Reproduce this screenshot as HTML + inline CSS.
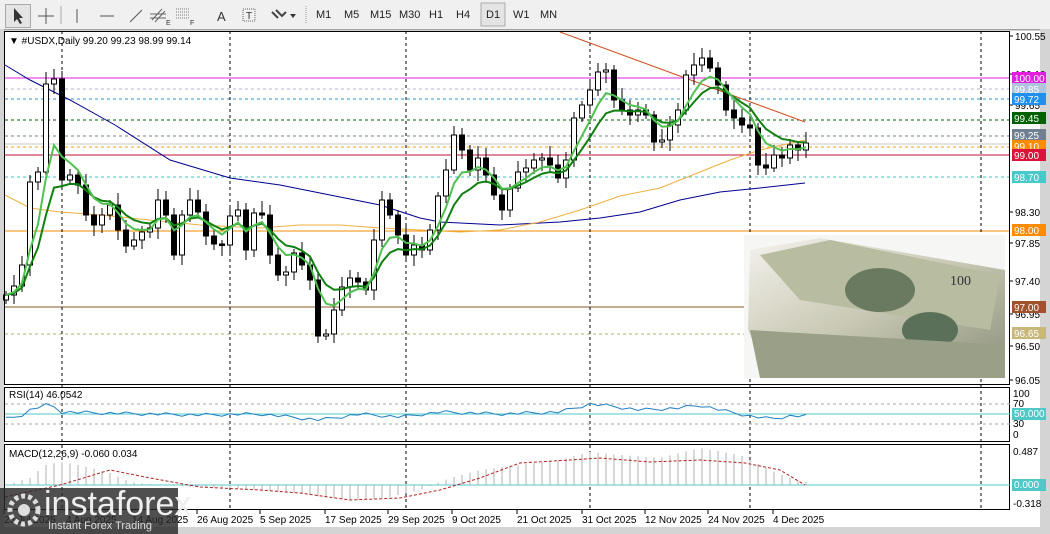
<!DOCTYPE html>
<html><head><meta charset="utf-8">
<style>
html,body{margin:0;padding:0;width:1050px;height:534px;overflow:hidden;background:#d4d4d4;font-family:"Liberation Sans",sans-serif}
#tb{position:absolute;left:0;top:0;width:1050px;height:29px;background:#f0f0f0;border-bottom:1px solid #a0a0a0}
.b{position:absolute;top:5px;font-size:11px;color:#222}
svg{position:absolute;left:0;top:0}
</style></head><body>
<div id="tb">
<div style="position:absolute;left:5px;top:4px;width:24px;height:22px;border:1px solid #aaa;background:#e4e4e4"></div>
<svg width="560" height="29" style="position:absolute;left:0;top:0">
<path d="M14 8 L14 22 L17 19 L20 24 L22 23 L19 18 L23 18 Z" fill="#333"/>
<path d="M46 8 V24 M38 16 H54" stroke="#555"/>
<line x1="61" y1="6" x2="61" y2="24" stroke="#aaa"/>
<line x1="77" y1="9" x2="77" y2="23" stroke="#555"/>
<line x1="100" y1="16" x2="114" y2="16" stroke="#555"/>
<line x1="130" y1="22" x2="142" y2="10" stroke="#555"/>
<path d="M152 20 L162 9 M155 22 L165 11 M150 14 H166 M150 18 H166" stroke="#666"/><text x="166" y="25" font-size="7" fill="#333">E</text>
<path d="M176 9 H190 M176 12 H190 M176 15 H190 M176 18 H190" stroke="#777" stroke-dasharray="1 1"/><text x="190" y="25" font-size="7" fill="#333">F</text>
<text x="217" y="21" font-size="13" fill="#333">A</text>
<rect x="243" y="9" width="12" height="12" fill="none" stroke="#666" stroke-dasharray="1 1"/><text x="246" y="19" font-size="10" fill="#333">T</text>
<path d="M272 12 L278 18 M276 10 L282 16 L286 12" stroke="#444" stroke-width="2" fill="none"/><path d="M290 14 L296 14 L293 18 Z" fill="#333"/>
<line x1="306" y1="6" x2="306" y2="24" stroke="#999" stroke-dasharray="1 1"/>
<rect x="481" y="3" width="24" height="23" fill="#e4e4e4" stroke="#aaa"/>
</svg>
<span class="b" style="left:316px;top:9px">M1</span><span class="b" style="left:344px;top:9px">M5</span><span class="b" style="left:370px;top:9px">M15</span><span class="b" style="left:399px;top:9px">M30</span><span class="b" style="left:429px;top:9px">H1</span><span class="b" style="left:456px;top:9px">H4</span><span class="b" style="left:486px;top:9px">D1</span><span class="b" style="left:513px;top:9px">W1</span><span class="b" style="left:540px;top:9px">MN</span>
</div>
<svg id="c" width="1050" height="534" style="top:0">
<rect x="4" y="31" width="1042" height="497" fill="#fff"/>
<rect x="1040" y="29" width="10" height="505" fill="#d4d4d4"/>
<rect x="0" y="527" width="1050" height="7" fill="#d4d4d4"/>
<rect x="0" y="29" width="4" height="505" fill="#d4d4d4"/>
<g id="g"></g>
</svg>
<script>
var g=document.getElementById('g'),s='';
function L(x1,y1,x2,y2,c,w,d){s+='<line x1="'+x1+'" y1="'+y1+'" x2="'+x2+'" y2="'+y2+'" stroke="'+c+'" stroke-width="'+(w||1)+'"'+(d?' stroke-dasharray="'+d+'"':'')+'/>';}
function T(x,y,t,c,sz,f){s+='<text x="'+x+'" y="'+y+'" font-size="'+(sz||10)+'" fill="'+(c||'#000')+'"'+(f?' font-family="'+f+'"':'')+'>'+t+'</text>';}
function P(pts,c,w,d){s+='<polyline fill="none" points="'+pts.map(function(p){return p[0]+','+p[1]}).join(' ')+'" stroke="'+c+'" stroke-width="'+(w||1)+'"'+(d?' stroke-dasharray="'+d+'"':'')+'/>';}
function R(x,y,w,h,f,st){s+='<rect x="'+x+'" y="'+y+'" width="'+w+'" height="'+h+'" fill="'+f+'"'+(st?' stroke="'+st+'"':'')+'/>';}
function I(pts,x){for(var k=1;k<pts.length;k++){if(x<=pts[k][0]){var a=pts[k-1],b=pts[k];return a[1]+(b[1]-a[1])*(x-a[0])/(b[0]-a[0]);}}return pts[pts.length-1][1];}
L(5,78,1010,78,'#e020e0',1);
L(5,89,1010,89,'#b0b8c8',1,'3 3');
L(5,99,1010,99,'#3090d0',1,'3 3');
L(5,120,1010,120,'#006000',1,'3 3');
L(5,136,1010,136,'#708090',1,'3 3');
L(5,144,1010,144,'#c8c8c8',1);
L(5,147,1010,147,'#f0a020',1,'3 3');
L(5,155,1010,155,'#c0103a',1);
L(5,177,1010,177,'#40c0c0',1,'3 3');
L(5,231,1010,231,'#f08c00',1);
L(5,307,745,307,'#8b5a2b',1);
L(5,334,745,334,'#b0b070',1,'3 3');
[62,230,406,590,750,981].forEach(function(x){L(x,31,x,510,'#000',1,'3 3');});
P([[5,65],[30,80],[70,100],[115,125],[170,160],[230,178],[280,185],[330,195],[380,205],[420,218],[440,222],[500,225],[560,222],[600,218],[640,212],[680,200],[720,192],[760,188],[805,183]],'#000090',1);
P([[5,195],[30,208],[60,212],[100,215],[150,220],[200,225],[260,228],[300,225],[340,225],[380,228],[420,230],[460,232],[500,230],[540,222],[580,210],[620,196],[660,188],[700,172],[730,160],[760,150],[805,140]],'#f0b040',1);
L(560,32,805,122,'#d05020',1);
var cl=[295,286,265,182,172,84,79,180,175,185,215,225,215,205,230,246,240,232,228,200,215,255,215,200,212,236,244,245,216,210,250,213,215,255,275,272,253,265,280,336,334,310,287,278,282,290,240,200,215,235,255,245,250,230,196,170,135,150,170,158,175,195,210,188,172,168,160,158,165,178,160,118,105,90,72,70,100,110,115,110,115,142,140,125,110,75,65,58,68,85,110,118,125,128,165,168,155,158,145,150,143];
var n=cl.length,st=(806-6)/(n-1),e1=[],e2=[],a=cl[0],b=cl[0];
for(var i=0;i<n;i++){var x=6+i*st,c=cl[i],o=i?cl[i-1]:300;var hi=Math.min(o,c)-4-(i*7%9),lo=Math.max(o,c)+4+(i*5%8);
L(x,hi,x,lo,'#000',1);var t=Math.min(o,c),h=Math.max(Math.abs(o-c),1.5);
R(x-2.5,t,5,h,c<o?'#fff':'#000','#000');
a=a+(c-a)*0.33;b=b+(c-b)*0.2;e1.push([x,a]);e2.push([x,b]);}
P(e2,'#108010',2);P(e1,'#50c050',2);
s+='<defs><linearGradient id="m" x1="0" y1="0" x2="1" y2="1"><stop offset="0" stop-color="#f4f2ec"/><stop offset=".5" stop-color="#c8c8b4"/><stop offset="1" stop-color="#8a8f7a"/></linearGradient></defs>';
R(744,235,261,143,'#f6f6f4');
s+='<polygon points="750,250 820,238 1005,270 1005,378 770,378 748,330" fill="url(#m)"/>';
s+='<polygon points="760,255 830,240 1000,275 990,330 800,300" fill="#b8bca0"/>';
s+='<ellipse cx="880" cy="290" rx="35" ry="22" fill="#6a7a60"/><ellipse cx="930" cy="330" rx="28" ry="18" fill="#5a7058"/>';
s+='<polygon points="750,330 1005,345 1005,378 760,378" fill="#9aa088"/>';
T(950,285,'100','#333',14,'Liberation Serif');
[[100.55,36],[100.10,74],[99.65,105],[98.30,212],[97.85,243],[97.40,281],[96.95,314],[96.50,346],[96.05,380]].forEach(function(v){L(1010,v[1],1013,v[1],'#000');T(1015,v[1]+4,v[0].toFixed(2),'#000',10);});
[['100.00',78,'#e020e0','#fff'],['99.85',89,'#b0c4de','#fff'],['99.72',99,'#2090f0','#fff'],['99.45',118,'#006000','#fff'],['99.25',135,'#708090','#fff'],['99.10',146,'#ff8c00','#fff'],['99.00',155,'#dc143c','#fff'],['98.70',177,'#48c8c8','#fff'],['98.00',230,'#ff8c00','#fff'],['97.00',307,'#a0522d','#fff'],['96.65',333,'#c8b878','#fff']].forEach(function(v){R(1012,v[1]-6,34,12,v[2]);T(1014,v[1]+4,v[0],v[3],10);});
R(4.5,31.5,1005,353,'none','#000');R(4.5,387.5,1005,54,'none','#000');R(4.5,444.5,1005,65,'none','#000');
T(9,44,'&#9660; #USDX,Daily  99.20 99.23 98.99 99.14','#000',10);
// RSI
L(5,404,1010,404,'#aaa',1,'3 3');L(5,424,1010,424,'#aaa',1,'3 3');L(5,414,1010,414,'#50c8c8',1);
var rsp=[[5,419],[20,416],[30,410],[45,405],[55,407],[62,412],[100,413],[200,415],[260,414],[320,420],[360,414],[400,417],[440,412],[500,414],[560,412],[590,404],[610,406],[640,410],[680,408],[700,405],[720,410],[750,416],[770,419],[790,416],[805,416]];
var rs=[];for(var i=0;i<n;i++){var x=6+i*st;rs.push([x,I(rsp,x)+((i*37)%5-2)*0.8]);}
P(rs,'#2080c0',1);
T(9,398,'RSI(14) 46.0542','#000',10);
[['100',397],['70',407],['30',427],['0',438]].forEach(function(v){T(1013,v[1],v[0],'#000',10);});
R(1012,408,34,12,'#50c8c8');T(1014,417,'50.000','#fff',10);
// MACD
L(5,485,1010,485,'#50c8c8',1);
var hp=[[5,485],[30,478],[45,465],[60,462],[80,465],[110,473],[130,482],[170,486],[230,488],[290,492],[330,498],[360,500],[390,497],[420,490],[450,478],[480,470],[520,465],[560,460],[590,452],[620,455],[660,458],[700,448],[740,455],[770,470],[800,482]];
var sp=[[5,497],[60,485],[110,470],[150,478],[200,487],[260,490],[300,493],[350,500],[400,498],[440,490],[480,478],[520,463],[570,460],[600,458],[650,462],[700,460],[745,463],[780,470],[805,485]];
for(var i=0;i<n;i++){var x=6+i*st;L(x,485,x,I(hp,x),'#b0b0b0',1);}
P(sp,'#b02020',1,'3 2');
T(9,457,'MACD(12,26,9) -0.060 0.034','#000',10);
T(1013,455,'0.487','#000',10);T(1013,507,'-0.318','#000',10);
R(1012,479,34,12,'#50c8c8');T(1014,488,'0.000','#fff',10);
[['25 Jul 2025',4],['4 Aug 2025',66],['14 Aug 2025',132],['26 Aug 2025',197],['5 Sep 2025',260],['17 Sep 2025',325],['29 Sep 2025',388],['9 Oct 2025',452],['21 Oct 2025',517],['31 Oct 2025',582],['12 Nov 2025',645],['24 Nov 2025',708],['4 Dec 2025',773]].forEach(function(v){T(v[1],523,v[0],'#000',10);L(v[1],510,v[1],514,'#000');});
R(0,488,178,46,'rgba(40,40,40,0.82)');
s+='<circle cx="24" cy="510" r="14" fill="none" stroke="#ddd" stroke-width="5" stroke-dasharray="4 3"/><circle cx="24" cy="510" r="6" fill="#ddd"/>';
T(44,515,'instaforex','#eee',34);T(48,529,'Instant Forex Trading','#ddd',11);
g.innerHTML=s;
</script>
</body></html>
